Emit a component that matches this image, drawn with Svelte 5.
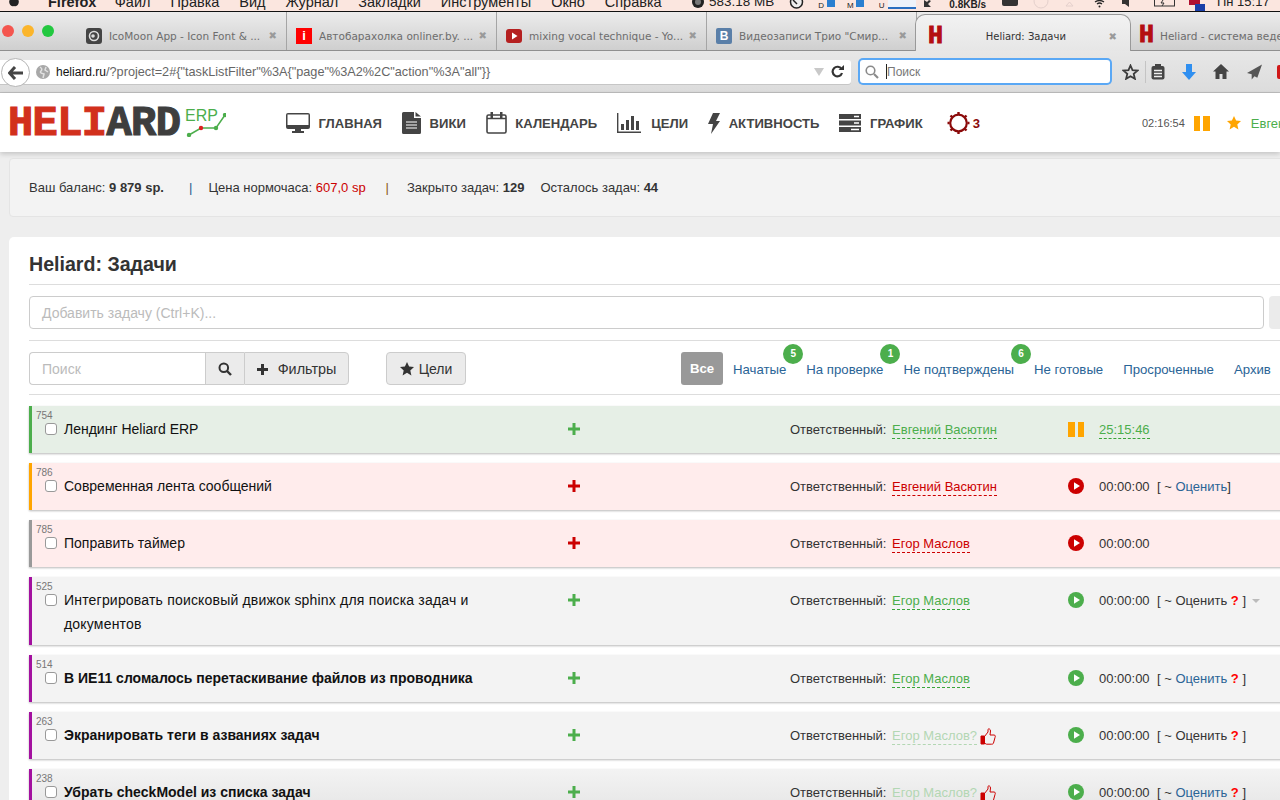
<script>
  const menuItems = ['Файл', 'Правка', 'Вид', 'Журнал', 'Закладки', 'Инструменты', 'Окно', 'Справка'];

  const tabs = [
    { title: 'IcoMoon App - Icon Font & ...', icon: 'moon' },
    { title: 'Автобарахолка onliner.by. ...', icon: 'onliner' },
    { title: 'mixing vocal technique - Yo...', icon: 'yt' },
    { title: 'Видеозаписи Трио "Смир...', icon: 'vk' }
  ];

  const filters = [
    { label: 'Начатые', badge: 5 },
    { label: 'На проверке', badge: 1 },
    { label: 'Не подтверждены', badge: 6 },
    { label: 'Не готовые' },
    { label: 'Просроченные' },
    { label: 'Архив' }
  ];

  const tasks = [
    { id: 754, title: 'Лендинг Heliard ERP', tone: 'started', bar: 'green', owner: 'Евгений Васютин', time: '25:15:46', running: true },
    { id: 786, title: 'Современная лента сообщений', tone: 'late', bar: 'orange', owner: 'Евгений Васютин', time: '00:00:00', rate: 'link' },
    { id: 785, title: 'Поправить таймер', tone: 'late', bar: 'gray', owner: 'Егор Маслов', time: '00:00:00' },
    { id: 525, title: 'Интегрировать поисковый движок sphinx для поиска задач и документов', tone: 'idle', bar: 'purple', loose: true, owner: 'Егор Маслов', time: '00:00:00', rate: 'plain', ask: true, caret: true },
    { id: 514, title: 'В ИЕ11 сломалось перетаскивание файлов из проводника', tone: 'idle', bar: 'purple', bold: true, owner: 'Егор Маслов', time: '00:00:00', rate: 'link', ask: true },
    { id: 263, title: 'Экранировать теги в азваниях задач', tone: 'idle', bar: 'purple', bold: true, owner: 'Егор Маслов?', pending: true, time: '00:00:00', rate: 'plain', ask: true },
    { id: 238, title: 'Убрать checkModel из списка задач', tone: 'idle', bar: 'purple', bold: true, owner: 'Егор Маслов?', pending: true, time: '00:00:00', rate: 'link', ask: true, fade: true }
  ];
</script>

{#snippet favH()}
  <span class="fav-h">H</span>
{/snippet}

{#snippet star(size, color)}
  <svg width={size} height={size} viewBox="0 0 14 14"><path d="M7 0l2.100 4.600 4.900.5-3.700 3.300 1.100 5L7 10.800l-4.400 2.600 1.100-5L0 5.100l4.900-.5z" fill={color}/></svg>
{/snippet}

<div class="screen">
  <div class="menubar">
    <svg class="apple" width="14" height="11" viewBox="0 0 14 11"><path d="M3 0h8c1 0 1 2 .5 3.500C10.500 6 9 6.500 7 6c-2 .5-3.500 0-4.500-2.500C2 2 2 0 3 0z" fill="#222"/></svg>
    <b class="firefox">Firefox</b>
    {#each menuItems as item}
      <span class="menu-item">{item}</span>
    {/each}
    <span class="status">
      <svg width="14" height="11" viewBox="0 0 14 11"><circle cx="7" cy="2" r="6" fill="#222"/><circle cx="7" cy="2" r="3" fill="#777"/></svg>
      <span class="mem">583.18 MB</span>
      <svg class="st-clock" width="15" height="11" viewBox="0 0 15 11"><circle cx="7.500" cy="2" r="6" fill="#eee" stroke="#222" stroke-width="1.500"/><path d="M4 0l4 4" stroke="#222" stroke-width="1.500"/></svg>
      <span class="st-bars">
        <i class="st-letter">D</i><i class="st-bar"></i>
        <i class="st-letter m">M</i><i class="st-bar"></i>
        <i class="st-letter u">U</i><i class="st-graph"></i>
      </span>
      <svg class="st-arrow" width="9" height="11" viewBox="0 0 9 11"><path d="M1 0v7h7L5 4l3-3-2-1-2 2z" fill="#333"/></svg>
      <b class="speed">0.8KB/s</b>
      <svg class="st-keys" width="16" height="11" viewBox="0 0 16 11"><rect y="-3" width="16" height="9" rx="2" fill="#333"/></svg>
      <svg class="st-faint" width="16" height="11" viewBox="0 0 16 11"><circle cx="8" cy="1" r="7" fill="none" stroke="#e4d0cc"/></svg>
      <svg class="st-faint2" width="9" height="11" viewBox="0 0 9 11"><path d="M4.500 2L8 6H1z" fill="none" stroke="#e4d0cc"/></svg>
      <svg class="st-wifi" width="11" height="11" viewBox="0 0 11 11"><path d="M1 2q4.500-3 9 0M3 4q2.500-2 5 0" fill="none" stroke="#222" stroke-width="1.300"/><circle cx="5.500" cy="6.500" r="1" fill="#222"/></svg>
      <svg class="st-sound" width="10" height="11" viewBox="0 0 10 11"><path d="M0 0h3l4-3v10L3 4H0z" fill="#333"/></svg>
      <svg class="st-batt" width="23" height="11" viewBox="0 0 23 11"><rect x=".5" y="-4" width="20" height="10" fill="none" stroke="#333"/><path d="M9 0l-2 3h3l-2 3" stroke="#333" fill="none"/></svg>
      <svg class="st-flag" width="16" height="11" viewBox="0 0 16 11"><rect x="0" width="11" height="5" fill="#b01030"/><rect x="6" y="4" width="10" height="7" fill="#1a3fa8"/></svg>
      <span class="clock">Пн 15:17</span>
    </span>
  </div>

  <div class="tabbar">
    <span class="lights"><i class="red"></i><i class="yellow"></i><i class="green"></i></span>
    {#each tabs as tab}
      <div class="tab">
        {#if tab.icon === 'moon'}
          <svg class="fav" width="16" height="16" viewBox="0 0 16 16"><rect width="16" height="16" rx="3" fill="#444"/><circle cx="8" cy="8" r="4.500" fill="none" stroke="#ddd" stroke-width="1.600"/><circle cx="7" cy="8" r="1.800" fill="#ddd"/></svg>
        {:else if tab.icon === 'onliner'}
          <span class="fav fav-i">i</span>
        {:else if tab.icon === 'yt'}
          <svg class="fav" width="16" height="16" viewBox="0 0 16 16"><rect y="1" width="16" height="14" rx="3" fill="#b52020"/><path d="M6 4.500L11.500 8 6 11.500z" fill="#fff"/></svg>
        {:else}
          <span class="fav fav-vk">В</span>
        {/if}
        <span class="tab-title">{tab.title}</span>
        <span class="tab-x">✖</span>
      </div>
    {/each}
    <div class="tab active">
      {@render favH()}
      <span class="tab-title">Heliard: Задачи</span>
      <span class="tab-x">✖</span>
    </div>
    <div class="tab next">
      {@render favH()}
      <span class="tab-title">Heliard - система веден</span>
    </div>
  </div>

  <div class="toolbar">
    <span class="back">
      <svg width="16" height="14" viewBox="0 0 16 14"><path d="M7 1L1.500 7 7 13M2 7h13" fill="none" stroke="#444" stroke-width="3"/></svg>
    </span>
    <div class="urlbar">
      <svg class="globe" width="14" height="14" viewBox="0 0 14 14"><circle cx="7" cy="7" r="7" fill="#a8a8a8"/><path d="M4 2q3 2 1 4t3 3l-1 4M10 2L9 5l3 2" fill="none" stroke="#e2e2e2" stroke-width="1.500"/></svg>
      <span class="url"><span class="host">heliard.ru</span>/?project=2#&#123;"taskListFilter"%3A&#123;"page"%3A2%2C"action"%3A"all"&#125;&#125;</span>
      <span class="url-drop"></span>
      <svg class="reload" width="13" height="13" viewBox="0 0 13 13"><path d="M10.500 4A4.800 4.800 0 1 0 11 8" fill="none" stroke="#333" stroke-width="2.200"/><path d="M7.500 5H13V0z" fill="#333"/></svg>
    </div>
    <div class="searchbar">
      <svg width="14" height="14" viewBox="0 0 14 14"><circle cx="5.500" cy="5.500" r="4.300" fill="none" stroke="#8a8a8a" stroke-width="1.600"/><path d="M9 9l4 4" stroke="#8a8a8a" stroke-width="2.200"/></svg>
      <span class="caret"></span>
      <span class="search-ph">Поиск</span>
    </div>
    <div class="tools">
      <svg width="17" height="16" viewBox="0 0 17 16"><path d="M8.500 1.500l2 4.700 5 .4-3.800 3.300 1.200 4.900-4.400-2.600-4.400 2.600 1.200-4.900L1.500 6.600l5-.4z" fill="none" stroke="#3c3c3c" stroke-width="1.800"/></svg>
      <i class="tool-sep"></i>
      <svg width="14" height="16" viewBox="0 0 14 16"><rect x=".5" y="2" width="13" height="13.500" rx="2" fill="#444"/><rect x="4" y="0" width="6" height="4" fill="#444"/><path d="M3 6.500h8M3 9.500h8M3 12.500h8" stroke="#eee" stroke-width="1.300"/></svg>
      <svg class="dl" width="14" height="16" viewBox="0 0 14 16"><path d="M4 0h6v8h4l-7 8-7-8h4z" fill="#2f8ff0"/></svg>
      <svg class="home" width="16" height="15" viewBox="0 0 16 15"><path d="M8 0L0 7.500h2.500V15h4v-5h3v5h4V7.500H16z" fill="#444"/></svg>
      <svg class="send" width="15" height="16" viewBox="0 0 16 16"><path d="M16 0L0 9l5 1.500V16l3-3.500 3 1.500z" fill="#555"/></svg>
      <i class="red-edge"></i>
    </div>
  </div>

  <nav class="nav">
    <a class="logo" href="#home">
      <span class="logo-word"><span class="logo-red">HELI</span><span class="logo-dark">ARD</span></span>
      <span class="logo-erp">ERP</span>
      <svg class="logo-line" width="40" height="24" viewBox="0 0 40 24"><path d="M3 22L15 15H30L39 2" fill="none" stroke="#4cae4c" stroke-width="1.500"/><circle cx="3" cy="22" r="2.200" fill="#4cae4c"/><circle cx="15" cy="15" r="2.200" fill="#d22"/><circle cx="30" cy="15" r="2.200" fill="#4cae4c"/><circle cx="39" cy="2" r="2.200" fill="#4cae4c"/></svg>
    </a>
    <div class="nav-links">
      <span class="nav-link">
        <svg width="24" height="20" viewBox="0 0 24 20"><path d="M2 0h20a2 2 0 0 1 2 2v12a2 2 0 0 1-2 2h-7v2h3v2H6v-2h3v-2H2a2 2 0 0 1-2-2V2a2 2 0 0 1 2-2z" fill="#444"/><rect x="1.500" y="1.500" width="21" height="10.500" fill="#fff"/></svg>
        ГЛАВНАЯ
      </span>
      <span class="nav-link">
        <svg width="19" height="22" viewBox="0 0 19 22"><path d="M1.500 0H12v6h7v14.500a1.500 1.500 0 0 1-1.500 1.500h-16A1.500 1.500 0 0 1 0 20.500v-19A1.500 1.500 0 0 1 1.500 0zM13.500 0L19 4.500h-5.500z" fill="#444"/><path d="M4 10h11M4 13h11M4 16h11" stroke="#fff" stroke-width="1.200"/></svg>
        ВИКИ
      </span>
      <span class="nav-link">
        <svg width="21" height="22" viewBox="0 0 21 22"><rect x="1" y="3" width="19" height="18" rx="1.500" fill="none" stroke="#444" stroke-width="1.600"/><path d="M1 6.500h19" stroke="#444" stroke-width="1.500"/><rect x="4.500" y="0" width="2.500" height="6" fill="#444"/><rect x="14" y="0" width="2.500" height="6" fill="#444"/></svg>
        КАЛЕНДАРЬ
      </span>
      <span class="nav-link wide">
        <svg width="24" height="20" viewBox="0 0 24 20"><path d="M.7 0v19.300H24" fill="none" stroke="#444" stroke-width="1.400"/><path d="M4 11h3v6H4zM9 7h3v10H9zM14 3h3v14h-3zM19 8h3v9h-3z" fill="#444"/></svg>
        ЦЕЛИ
      </span>
      <span class="nav-link">
        <svg width="12" height="21" viewBox="0 0 12 21"><path d="M5 0h7L8 8h4L3 21l2-10H0z" fill="#444"/></svg>
        АКТИВНОСТЬ
      </span>
      <span class="nav-link">
        <svg width="22" height="18" viewBox="0 0 22 18"><path d="M0 0h22v5H0zM0 6.500h22v5H0zM0 13h22v5H0z" fill="#444"/><path d="M15 2.500h5M15 9h5M12 15.500h8" stroke="#fff" stroke-width="1.400"/></svg>
        ГРАФИК
      </span>
      <span class="nav-link alert">
        <svg width="23" height="22" viewBox="0 0 23 22"><circle cx="11.500" cy="11" r="8.300" fill="none" stroke="#8b0a0a" stroke-width="2.200"/><path d="M11.500 0v2M11.500 20v2M3.500 3.500l1.500 1.500M18 17l1.500 1.500M19.500 3.500L18 5M5 17l-1.500 1.500M.5 11h2M20.500 11h2" stroke="#8b0a0a" stroke-width="2.400"/></svg>
        3
      </span>
    </div>
    <div class="nav-right">
      <span class="nav-time">02:16:54</span>
      <span class="pause small"><i></i><i></i></span>
      <span class="nav-star">{@render star(14, '#ffa500')}</span>
      <span class="nav-user">Евгений Васютин</span>
    </div>
  </nav>

  <main class="page">
    <section class="balance">
      <span>Ваш баланс: <b>9 879 sp.</b></span>
      <span class="sep blue">|</span>
      <span>Цена нормочаса: <span class="price">607,0 sp</span></span>
      <span class="sep brown">|</span>
      <span>Закрыто задач: <b>129</b></span>
      <span class="left-count">Осталось задач: <b>44</b></span>
    </section>

    <section class="card">
      <h1>Heliard: Задачи</h1>
      <div class="add-row">
        <div class="add-input">Добавить задачу (Ctrl+K)...</div>
        <div class="add-btn"></div>
      </div>
      <div class="filter-row">
        <div class="search-group">
          <div class="search-input">Поиск</div>
          <div class="btn icon-btn">
            <svg width="14" height="14" viewBox="0 0 14 14"><circle cx="5.800" cy="5.800" r="4.300" fill="none" stroke="#333" stroke-width="2"/><path d="M9 9l4 4" stroke="#333" stroke-width="2.400"/></svg>
          </div>
          <div class="btn filters-btn">
            <svg width="11" height="11" viewBox="0 0 11 11"><path d="M4 0h3v4h4v3H7v4H4V7H0V4h4z" fill="#333"/></svg>
            Фильтры
          </div>
        </div>
        <div class="btn goals-btn">{@render star(14, '#333')} Цели</div>
        <div class="status-tabs">
          <span class="all">Все</span>
          {#each filters as f}
            <span class="status-link">
              {f.label}
              {#if f.badge}<span class="badge">{f.badge}</span>{/if}
            </span>
          {/each}
        </div>
      </div>

      <div class="tasks">
        {#each tasks as t}
          <div class="task {t.tone} bar-{t.bar}" class:fade={t.fade}>
            <span class="task-id">{t.id}</span>
            <span class="check"></span>
            <span class="task-title" class:bold={t.bold} class:loose={t.loose}>{t.title}</span>
            <svg class="task-plus" width="12" height="12" viewBox="0 0 12 12"><path d="M4.500 0h3v4.500H12v3H7.500V12h-3V7.500H0v-3h4.500z"/></svg>
            <span class="owner">
              Ответственный: <span class="owner-name" class:pending={t.pending}>{t.owner}</span>
              {#if t.pending}
                <svg class="thumb" width="16" height="17" viewBox="0 0 16 17"><path d="M1 8h3.500v8H1zM4.500 8.500L8 4V1.500C8 .5 10.500 .5 10.500 3L10 7h4c1.500 0 1.500 1.500 1 2.500L13.500 15c-.3 1-1 1.200-2 1.200H6.500l-2-1" fill="none" stroke="#c00" stroke-width="1"/><rect x="1" y="8" width="3.500" height="8" fill="#c00"/></svg>
              {/if}
            </span>
            <span class="task-timer">
              {#if t.running}
                <span class="pause"><i></i><i></i></span>
              {:else}
                <svg width="16" height="16" viewBox="0 0 16 16"><circle cx="8" cy="8" r="8" class="play-bg"/><path d="M6 4.200L12 8l-6 3.800z" fill="#fff"/></svg>
              {/if}
            </span>
            <span class="time" class:run={t.running}>{t.time}</span>
            {#if t.rate}
              <span class="rate">
                [ ~ <span class:rate-link={t.rate === 'link'}>Оценить</span>{#if t.ask}<b class="ask">&nbsp;?</b>&nbsp;{/if}]
                {#if t.caret}<i class="row-caret"></i>{/if}
              </span>
            {/if}
          </div>
        {/each}
      </div>
    </section>
  </main>
</div>

<style>
  :global(body) {
    margin: 0;
    background: #eee;
  }

  .screen {
    width: 1280px;
    height: 800px;
    overflow: hidden;
    font-family: "Liberation Sans", Arial, sans-serif;
    font-size: 13px;
    color: #333;
    position: relative;
  }

  i {
    font-style: normal;
  }

  /* mac menu bar, cut off by the top of the shot */
  .menubar {
    height: 11px;
    border-bottom: 1px solid #111;
    background: #fbe6df;
    display: flex;
    align-items: flex-start;
    font-size: 14.500px;
    line-height: 14px;
    color: #222;
    overflow: hidden;
    padding-left: 7px;
    white-space: nowrap;
  }

  .menubar > * {
    margin-top: -5px;
  }

  .apple {
    margin-top: 0 !important;
    flex: none;
  }

  .firefox {
    margin-left: 27px;
    margin-right: 18.500px;
  }

  .menu-item {
    margin-right: 19.900px;
  }

  .status {
    position: absolute;
    left: 691px;
    top: 0;
    height: 11px;
    display: flex;
    margin-top: 0 !important;
    font-size: 13.500px;
  }

  .status > * {
    flex: none;
  }

  .mem {
    margin-left: 4px;
    margin-top: -5px;
  }

  .st-clock { margin-left: 15px; }

  .st-bars {
    display: flex;
    margin-left: 14px;
    font-size: 8px;
    line-height: 9px;
    width: 98px;
  }

  .st-letter {
    width: 9px;
    margin-top: 1px;
  }

  .st-letter.m { margin-left: 12px; }
  .st-letter.u { margin-left: 15px; }

  .st-bar {
    width: 8px;
    height: 7px;
    background: #2a7fd0;
  }

  .st-graph {
    width: 29px;
    height: 7px;
    background: #eef3fa;
    border-bottom: 2px solid #2a6fc0;
  }

  .st-arrow { margin-left: 7px; }

  .speed {
    margin-left: 17px;
    font-size: 10px;
    line-height: 10px;
    margin-top: 0;
  }

  .st-keys { margin-left: 16px; }
  .st-faint { margin-left: 15px; }
  .st-faint2 { margin-left: 16px; }
  .st-wifi { margin-left: 20px; }
  .st-sound { margin-left: 17px; }
  .st-batt { margin-left: 22px; }
  .st-flag { margin-left: 12px; }

  .clock {
    margin-left: 12px;
    margin-top: -5px;
    font-size: 13px;
  }

  /* browser tabs */
  .tabbar {
    height: 38px;
    background: linear-gradient(#ececec, #cfcfcf);
    border-bottom: 1px solid #8f8f8f;
    display: flex;
    align-items: stretch;
    font-family: "DejaVu Sans", sans-serif;
    font-size: 10.500px;
    color: #6d6d6d;
    position: relative;
  }

  .lights {
    width: 77px;
    flex: none;
    display: flex;
    gap: 8px;
    padding: 13px 0 0 2px;
    box-sizing: border-box;
  }

  .lights i {
    width: 12px;
    height: 12px;
    border-radius: 50%;
  }

  .lights .red { background: #f4564f; }
  .lights .yellow { background: #fbb52b; }
  .lights .green { background: #22c840; }

  .tab {
    width: 210px;
    flex: none;
    box-sizing: border-box;
    display: flex;
    align-items: center;
    padding: 9px 9px 0 9px;
    border-right: 1px solid #a5a5a5;
    white-space: nowrap;
  }

  .fav {
    flex: none;
    width: 16px;
    height: 16px;
  }

  .fav-i {
    background: #f00;
    color: #fff;
    text-align: center;
    font: bold 13px/16px "Liberation Sans", sans-serif;
  }

  .fav-vk {
    background: #5a7fa8;
    color: #fff;
    border-radius: 2px;
    text-align: center;
    font: bold 12px/16px "Liberation Sans", sans-serif;
  }

  .fav-h {
    flex: none;
    width: 17px;
    text-align: center;
    color: #b40f0f;
    font: bold 25px/18px "Liberation Mono", monospace;
    -webkit-text-stroke: 1px #b40f0f;
  }

  .tab-title {
    margin-left: 7px;
    flex: 1;
    overflow: hidden;
  }

  .tab-x {
    font-size: 10px;
    color: #9a9a9a;
    flex: none;
  }

  .tab.active {
    width: 216px;
    margin-left: -2px;
    margin-top: 2px;
    padding: 7px 13px 0 11px;
    background: linear-gradient(#f2f2f2, #e6e6e6);
    border: 1px solid #999;
    border-bottom: none;
    border-radius: 10px 10px 0 0;
    color: #333;
    position: relative;
    top: 0;
    height: 37px;
  }

  .tab.active .tab-title {
    text-align: center;
    font-size: 10px;
    padding-right: 8px;
  }

  .tab.next {
    border-right: none;
    padding-left: 7px;
  }

  .tab.next .tab-title {
    margin-left: 5px;
  }

  /* url row */
  .toolbar {
    height: 42px;
    background: linear-gradient(#e7e7e7, #dcdcdc);
    border-bottom: 1px solid #bdbdbd;
    display: flex;
    align-items: center;
    position: relative;
    font-family: "DejaVu Sans", sans-serif;
    font-size: 10.500px;
    box-sizing: border-box;
  }

  .back {
    position: absolute;
    left: 1px;
    top: 7px;
    width: 27px;
    height: 27px;
    border-radius: 50%;
    background: #fff;
    border: 1px solid #b5b5b5;
    display: flex;
    align-items: center;
    justify-content: center;
    z-index: 1;
  }

  .urlbar {
    width: 851px;
    height: 24px;
    box-sizing: border-box;
    flex: none;
    background: #fff;
    border-radius: 0 3px 3px 0;
    display: flex;
    align-items: center;
    padding-left: 36px;
    box-shadow: 0 1px 0 #c6c6c6;
  }

  .url {
    margin-left: 6px;
    color: #666;
    font-family: "Liberation Sans", sans-serif;
    font-size: 12.700px;
    flex: 1;
    white-space: nowrap;
  }

  .host {
    color: #111;
    font-size: 12px;
  }

  .url-drop {
    width: 0;
    height: 0;
    border-left: 5px solid transparent;
    border-right: 5px solid transparent;
    border-top: 8px solid #c9c9c9;
    margin-right: 7px;
  }

  .reload { margin-right: 7px; }

  .searchbar {
    width: 250px;
    height: 23px;
    margin-left: 9px;
    box-sizing: border-box;
    flex: none;
    background: #fff;
    border-radius: 3px;
    box-shadow: 0 0 0 2px #5aa8f5;
    display: flex;
    align-items: center;
    padding-left: 5px;
    font-family: "Liberation Sans", sans-serif;
    font-size: 12px;
    color: #777;
  }

  .caret {
    width: 1px;
    height: 15px;
    background: #222;
    margin-left: 7px;
  }

  .tools {
    display: flex;
    align-items: center;
    margin-left: 12px;
    flex: none;
  }

  .tool-sep {
    width: 1px;
    height: 22px;
    background: #c4c4c4;
    margin: 0 5px 0 6px;
  }

  .dl { margin-left: 17px; }
  .home { margin-left: 17px; }
  .send { margin-left: 18px; }

  .red-edge {
    width: 8px;
    height: 14px;
    background: #d01818;
    border-radius: 2px;
    margin-left: 15px;
  }

  /* site header */
  .nav {
    height: 59px;
    box-sizing: border-box;
    padding-top: 1px;
    background: #fff;
    box-shadow: 0 2px 5px rgba(0, 0, 0, .18);
    display: flex;
    align-items: center;
    position: relative;
    z-index: 1;
  }

  .logo {
    width: 286px;
    flex: none;
    box-sizing: border-box;
    padding-left: 8px;
    display: flex;
    position: relative;
    text-decoration: none;
    height: 30px;
  }

  .logo-word {
    font: bold 42px/32px "Liberation Mono", monospace;
    letter-spacing: -.6px;
    white-space: nowrap;
  }

  .logo-red {
    color: #d2301c;
    -webkit-text-stroke: 1.200px #d2301c;
  }

  .logo-dark {
    color: #3e3e3e;
    -webkit-text-stroke: 1.200px #3e3e3e;
  }

  .logo-erp {
    position: absolute;
    left: 185px;
    top: -2px;
    color: #4cae4c;
    font-size: 16px;
    line-height: 20px;
  }

  .logo-line {
    position: absolute;
    left: 186px;
    top: 5px;
  }

  .nav-links {
    display: flex;
    align-items: center;
    gap: 20px;
    flex: none;
  }

  .nav-link {
    display: flex;
    align-items: center;
    gap: 8.500px;
    font-weight: bold;
    font-size: 13.100px;
    color: #444;
    white-space: nowrap;
  }

  .nav-link.wide {
    gap: 10px;
  }

  .nav-link.alert {
    color: #8b0a0a;
    gap: 3px;
    margin-left: 4px;
  }

  .nav-right {
    display: flex;
    align-items: center;
    margin-left: 162px;
    white-space: nowrap;
    flex: none;
  }

  .nav-time {
    font-size: 11px;
    color: #555;
  }

  .pause {
    display: inline-flex;
    gap: 3px;
  }

  .pause i {
    width: 6.500px;
    height: 15px;
    background: #ffa500;
  }

  .pause.small {
    margin-left: 9px;
  }

  .nav-star {
    display: flex;
    margin-left: 17px;
  }

  .nav-user {
    color: #4cae4c;
    margin-left: 10px;
  }

  /* content */
  .page {
    padding: 6px 0 0 9px;
    width: 1500px;
  }

  .balance {
    height: 59px;
    box-sizing: border-box;
    background: #f3f3f3;
    border: 1px solid #e4e4e4;
    border-radius: 4px;
    display: flex;
    align-items: center;
    padding-left: 19px;
    white-space: nowrap;
  }

  .sep { margin: 0 16px 0 25px; }
  .sep.blue { color: #1f5f8f; }
  .sep.brown { color: #8a5a1a; margin: 0 18px 0 20px; }
  .price { color: #c00; }
  .left-count { margin-left: 16px; }

  .card {
    margin-top: 20px;
    background: #fff;
    border-radius: 5px 5px 0 0;
    padding: 0 20px;
    height: 600px;
  }

  h1 {
    margin: 0;
    height: 48px;
    box-sizing: border-box;
    padding-top: 16px;
    font-size: 19.600px;
    line-height: 23px;
    font-weight: bold;
    color: #333;
    border-bottom: 1px solid #ddd;
  }

  .add-row {
    display: flex;
    gap: 5px;
    padding: 11px 0 11px;
    border-bottom: 1px solid #ddd;
  }

  .add-input {
    width: 1235px;
    height: 33px;
    box-sizing: border-box;
    border: 1px solid #ccc;
    border-radius: 4px;
    padding-left: 12px;
    font-size: 14px;
    line-height: 33px;
    color: #bbb;
    flex: none;
  }

  .add-btn {
    width: 100px;
    height: 33px;
    background: #ebebeb;
    border-radius: 4px;
    flex: none;
  }

  .filter-row {
    display: flex;
    align-items: center;
    padding: 11px 0 9px;
    border-bottom: 1px solid #ddd;
  }

  .search-group {
    display: flex;
    flex: none;
  }

  .search-input {
    width: 176px;
    height: 33px;
    box-sizing: border-box;
    border: 1px solid #ccc;
    border-right: none;
    border-radius: 4px 0 0 4px;
    padding-left: 12px;
    font-size: 14px;
    line-height: 33px;
    color: #bbb;
  }

  .btn {
    height: 33px;
    box-sizing: border-box;
    padding-top: 1px;
    background: #ebebeb;
    border: 1px solid #ccc;
    display: flex;
    align-items: center;
    justify-content: center;
    font-size: 14px;
    color: #333;
    flex: none;
  }

  .icon-btn {
    width: 39px;
    border-right: none;
  }

  .filters-btn {
    width: 105px;
    gap: 10px;
    border-radius: 0 4px 4px 0;
    font-size: 14.400px;
  }

  .goals-btn {
    width: 80px;
    margin-left: 37px;
    border-radius: 4px;
    gap: 5px;
  }

  .status-tabs {
    display: flex;
    align-items: center;
    margin-left: 215px;
    gap: 20px;
    font-size: 13.200px;
    color: #2a6496;
    white-space: nowrap;
  }

  .all {
    width: 42px;
    height: 33px;
    line-height: 33px;
    text-align: center;
    background: #999;
    color: #fff;
    font-weight: bold;
    border-radius: 3px;
    margin-right: -10px;
  }

  .status-link {
    position: relative;
    padding-top: 2px;
  }

  .badge {
    position: absolute;
    right: -17px;
    top: -16px;
    width: 20px;
    height: 20px;
    border-radius: 50%;
    background: #4cae4c;
    color: #fff;
    font-size: 10px;
    font-weight: bold;
    line-height: 20px;
    text-align: center;
  }

  .tasks {
    padding-top: 11px;
  }

  .task {
    position: relative;
    display: grid;
    grid-template-columns: 19px 420px 306px 278px 31px 58px 1fr;
    align-items: start;
    min-height: 47px;
    box-sizing: border-box;
    padding: 11px 0 9px 13px;
    margin-bottom: 10px;
    border-left: 3px solid #999;
    box-shadow: 0 1px 2px rgba(0, 0, 0, .28);
    line-height: 24px;
    font-size: 13px;
    color: #333;
  }

  .task.started { background: #e6efe6; }
  .task.late { background: #ffecec; }
  .task.idle { background: #f3f3f3; }
  .task.fade { background: linear-gradient(#f3f3f3, #e4e4e4); }

  .bar-green { border-left-color: #4cae4c !important; }
  .bar-orange { border-left-color: #ffa500 !important; }
  .bar-gray { border-left-color: #999 !important; }
  .bar-purple { border-left-color: #a3109f !important; }

  .task-id {
    position: absolute;
    left: 4px;
    top: 4px;
    font-size: 10px;
    line-height: 12px;
    color: #777;
  }

  .check {
    width: 12px;
    height: 12px;
    box-sizing: border-box;
    border: 1px solid #999;
    border-radius: 3px;
    background: #fff;
    margin-top: 6px;
  }

  .task-title {
    font-size: 14px;
    color: #111;
  }

  .task-title.bold {
    font-weight: bold;
  }

  .task-title.loose {
    letter-spacing: .19px;
  }

  .task-plus {
    margin: 6px 0 0 84px;
  }

  .started .task-plus,
  .idle .task-plus { fill: #4cae4c; }
  .late .task-plus { fill: #c00; }

  .owner {
    display: flex;
    align-items: center;
    gap: 2px;
    padding-top: 1px;
    white-space: pre;
  }

  .owner-name {
    line-height: 16px;
    border-bottom: 1px dashed;
  }

  .started .owner-name,
  .idle .owner-name { color: #4cae4c; border-color: #3aa53a; }
  .late .owner-name { color: #c00; border-color: #c00; }

  .idle .owner-name.pending {
    color: #b3d7b3;
    border-color: #b3d7b3;
  }

  .thumb {
    margin-left: 1px;
  }

  .task-timer {
    display: flex;
    height: 24px;
    align-items: center;
  }

  .play-bg { fill: #4cae4c; }
  .late .play-bg { fill: #c00; }

  .time {
    line-height: 16px;
    margin-top: 5px;
    justify-self: start;
  }

  .time.run {
    color: #4cae4c;
    border-bottom: 1px dashed #3aa53a;
  }

  .rate {
    white-space: nowrap;
    position: relative;
    padding-top: 1px;
  }

  .rate-link { color: #2a6496; }

  .ask {
    color: #f00;
  }

  .row-caret {
    display: inline-block;
    width: 0;
    height: 0;
    border-left: 4px solid transparent;
    border-right: 4px solid transparent;
    border-top: 4px solid #bbb;
    margin-left: 2px;
    vertical-align: 2px;
  }
</style>
